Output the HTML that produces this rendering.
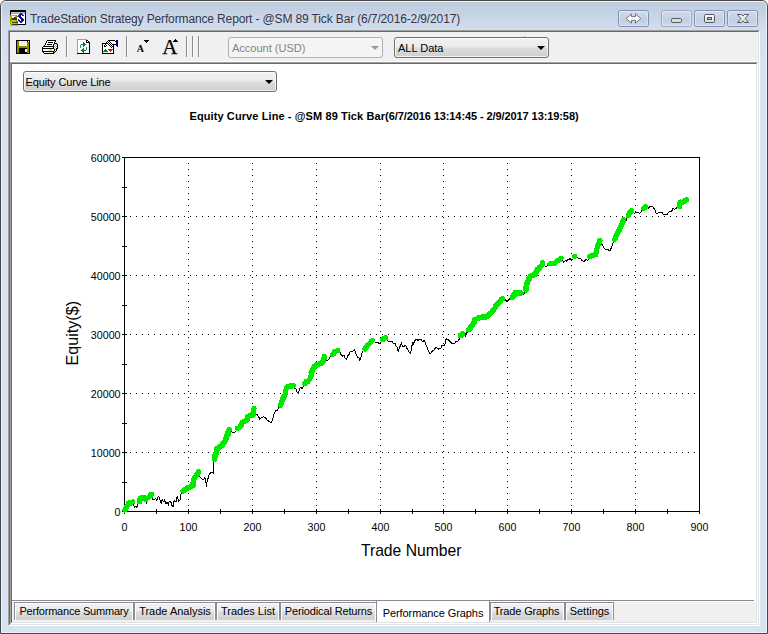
<!DOCTYPE html>
<html><head><meta charset="utf-8"><title>TradeStation Strategy Performance Report</title>
<style>
*{box-sizing:border-box;margin:0;padding:0}
html,body{width:768px;height:634px;overflow:hidden;background:#fff}
body{font-family:"Liberation Sans",sans-serif;font-size:11px;color:#000;position:relative}
.abs{position:absolute}
#frame{position:absolute;left:0;top:0;width:768px;height:634px;border:1px solid #474747;border-radius:6px 6px 0 0;
 background:linear-gradient(to bottom,#bccbdc 0px,#c6d4e4 14px,#d2dfee 30px,#d6e3f1 60px,#d6e3f1 100%);}
#frame:before{content:"";position:absolute;left:0;top:0;right:0;bottom:0;border:1px solid #ecf2f9;border-radius:5px 5px 0 0}
#titletxt{left:30px;top:10px;font-size:12px;line-height:18px;color:#34344a;white-space:nowrap;letter-spacing:-0.135px;text-shadow:0 0 5px rgba(232,238,246,.6)}
.cbtn{position:absolute;top:10px;height:17px;width:31px;border:1px solid #8392b3;border-radius:2.5px;
 background:linear-gradient(to bottom,#cfdbe9 0,#c6d3e4 48%,#c0cee1 52%,#cad7e7 100%);box-shadow:inset 0 0 0 1px rgba(255,255,255,.4)}
#client{left:8px;top:30px;width:752px;height:596px;background:#f0f0f0;border-style:solid;border-width:1px;border-color:#a0a0a0 #fff #fff #a0a0a0}
#client2{left:9px;top:31px;width:750px;height:594px;border-style:solid;border-width:1px;border-color:#696969 #e3e3e3 #e3e3e3 #696969}
#view{left:10px;top:62px;width:748px;height:562px;background:#fff;border-style:solid;border-width:1px;border-color:#a0a0a0 #fff #fff #a0a0a0}
#view2{left:11px;top:63px;width:746px;height:560px;border-style:solid;border-width:1px;border-color:#696969 #e3e3e3 #e3e3e3 #696969}
#tbline{left:10px;top:61px;width:748px;height:1px;background:#fff}
.sep{position:absolute;top:36px;height:21px;width:2px;border-left:1px solid #8c8c8c;border-right:1px solid #f8f8f8}
.combo{position:absolute;height:21px;border:1px solid #707070;border-radius:3px;background:linear-gradient(to bottom,#f2f2f2 0,#ebebeb 48%,#dddddd 52%,#cfcfcf 100%);box-shadow:inset 0 0 0 1px rgba(255,255,255,.7);line-height:21px;padding-left:3px;white-space:nowrap}
.combo i{position:absolute;right:3.5px;top:8px;width:0;height:0;border-left:4px solid transparent;border-right:4px solid transparent;border-top:4px solid #000}
.combo.dis{border-color:#adb2b5;background:#f4f4f4;color:#838383;box-shadow:none}
.combo.dis i{border-top-color:#9a9a9a}
#tabstrip{left:12px;top:601px;width:744px;height:21px;background:#f0f0f0;border-top:1px solid #fff}
#tabline{left:12px;top:600px;width:742px;height:1px;background:#898c95}
.tab{position:absolute;top:602px;height:18px;border:1px solid #898c95;border-bottom:none;background:linear-gradient(to bottom,#f2f2f2 0,#ebebeb 47%,#dddddd 53%,#cfcfcf 100%);box-shadow:inset 1px 1px 0 #fff,inset -1px 0 0 #fff;line-height:17px;text-align:center;white-space:nowrap;padding-top:0px}
.tab.act{top:600px;height:22px;background:#fff;box-shadow:none;border-top:1px solid #898c95;line-height:24px;border-bottom:none}
svg text{font-family:"Liberation Sans",sans-serif}
</style></head><body>
<div id="frame"></div>
<!-- app icon -->
<svg class="abs" style="left:10px;top:10px" width="16" height="16" viewBox="0 0 16 16" shape-rendering="crispEdges"><path d="M0,0h16v1h-16zM0,1h16v1h-16zM0,2h1v1h-1zM15,2h1v1h-1zM0,3h1v1h-1zM15,3h1v1h-1zM0,4h1v1h-1zM15,4h1v1h-1zM15,5h1v1h-1zM15,6h1v1h-1zM15,7h1v1h-1zM15,8h1v1h-1zM15,9h1v1h-1zM15,10h1v1h-1zM15,11h1v1h-1zM15,12h1v1h-1zM15,13h1v1h-1zM8,14h8v1h-8z" fill="#000"/><path d="M1,2h14v1h-14zM1,3h9v1h-9zM12,3h3v1h-3z" fill="#b4b4b4"/><path d="M10,3h2v1h-2zM9,4h4v1h-4zM8,5h3v1h-3zM12,5h2v1h-2zM8,6h3v1h-3zM9,7h3v1h-3zM10,8h3v1h-3zM8,9h1v1h-1zM11,9h3v1h-3zM8,10h2v1h-2zM11,10h3v1h-3zM9,11h4v1h-4zM10,12h2v1h-2z" fill="#10109c"/><path d="M1,4h8v1h-8zM13,4h2v1h-2zM7,5h1v1h-1zM11,5h1v1h-1zM14,5h1v1h-1zM2,6h3v1h-3zM11,6h4v1h-4zM2,7h2v1h-2zM7,7h2v1h-2zM12,7h3v1h-3zM7,8h3v1h-3zM13,8h2v1h-2zM7,9h1v1h-1zM9,9h2v1h-2zM14,9h1v1h-1zM7,10h1v1h-1zM10,10h1v1h-1zM14,10h1v1h-1zM8,11h1v1h-1zM13,11h2v1h-2zM8,12h2v1h-2zM12,12h3v1h-3zM8,13h7v1h-7z" fill="#fff"/><path d="M0,5h1v1h-1zM6,5h1v1h-1zM0,6h1v1h-1zM6,6h2v1h-2zM1,7h1v1h-1zM6,7h1v1h-1zM1,8h1v1h-1zM0,9h2v1h-2zM0,10h2v1h-2zM6,10h1v1h-1zM0,11h1v1h-1zM6,11h2v1h-2zM0,13h1v1h-1zM7,13h1v1h-1zM1,15h1v1h-1zM6,15h1v1h-1z" fill="#8a8a00"/><path d="M1,5h5v1h-5zM1,6h1v1h-1zM5,6h1v1h-1zM0,7h1v1h-1zM0,8h1v1h-1zM2,10h4v1h-4zM1,11h5v1h-5zM0,12h2v1h-2zM1,13h6v1h-6zM0,14h2v1h-2zM2,15h4v1h-4z" fill="#c4c400"/><path d="M4,7h2v1h-2zM2,8h5v1h-5zM2,9h5v1h-5zM2,12h6v1h-6zM2,14h6v1h-6z" fill="#3c3c00"/></svg>
<div id="titletxt" class="abs">TradeStation Strategy Performance Report - @SM 89 Tick Bar (6/7/2016-2/9/2017)</div>
<!-- caption buttons -->
<div class="cbtn" style="left:618px"><svg width="29" height="15" viewBox="0 0 29 15" style="position:absolute;left:0;top:0"><path d="M7.200,7.500l5.300,-4.600v2.800h4v-2.800l5.300,4.600l-5.300,4.600v-2.800h-4v2.800z" fill="#fff" stroke="#6e727a" stroke-width="1" stroke-linejoin="round"/></svg></div>
<div class="cbtn" style="left:661px;border-color:#9ba8bf"><svg width="29" height="15" viewBox="0 0 29 15" style="position:absolute;left:0;top:0"><rect x="9.500" y="7.500" width="10" height="4" rx="1.2" fill="#dcdcdc" stroke="#55595f"/></svg></div>
<div class="cbtn" style="left:694px"><svg width="29" height="15" viewBox="0 0 29 15" style="position:absolute;left:0;top:0"><defs><linearGradient id="gg" x1="0" y1="0" x2="0" y2="1"><stop offset="0" stop-color="#fff"/><stop offset="1" stop-color="#d4d6da"/></linearGradient></defs><rect x="9.500" y="3.500" width="10" height="8" rx="1.2" fill="url(#gg)" stroke="#55595f"/><rect x="12.500" y="6.500" width="4" height="2" fill="#c4d0e4" stroke="#4a4e58"/></svg></div>
<div class="cbtn" style="left:727px"><svg width="29" height="15" viewBox="0 0 29 15" style="position:absolute;left:0;top:0"><path d="M9.500,3.500h4l1.500,1.700l1.500,-1.700h4l-3.400,4l3.400,4h-4l-1.500,-1.700l-1.500,1.700h-4l3.400,-4z" fill="url(#gg)" stroke="#55595f" stroke-width="1" stroke-linejoin="round"/></svg></div>

<div id="client" class="abs"></div><div id="client2" class="abs"></div>
<div id="tbline" class="abs"></div>
<div id="view" class="abs"></div><div id="view2" class="abs"></div>

<!-- toolbar icons -->
<svg class="abs" style="left:12px;top:34px" width="200" height="26" viewBox="12 34 200 26" shape-rendering="crispEdges">
<!-- save -->
<rect x="16" y="40" width="14" height="14" fill="#000"/><rect x="17" y="41" width="2" height="12" fill="#8a8a00"/><rect x="27" y="42" width="2" height="11" fill="#8a8a00"/><rect x="19" y="46" width="8" height="2" fill="#8a8a00"/>
<rect x="19" y="41" width="8" height="5" fill="#f0f0f0"/><rect x="25" y="49" width="2" height="3" fill="#f0f0f0"/><rect x="28" y="41" width="1" height="1" fill="#f0f0f0"/>
<!-- print -->
<path d="M47,40h9v1h-9zM46,41h1v1h-1zM55,41h1v1h-1zM46,42h1v1h-1zM48,42h5v1h-5zM54,42h1v1h-1zM45,43h1v1h-1zM54,43h3v1h-3zM45,44h1v1h-1zM47,44h5v1h-5zM53,44h1v1h-1zM57,44h1v1h-1zM44,45h1v1h-1zM53,45h1v1h-1zM57,45h1v1h-1zM43,46h11v1h-11zM57,46h1v1h-1zM42,47h1v1h-1zM53,47h1v1h-1zM57,47h1v1h-1zM42,48h12v1h-12zM56,48h2v1h-2zM42,49h1v1h-1zM54,49h1v1h-1zM56,49h1v1h-1zM42,50h1v1h-1zM54,50h1v1h-1zM56,50h1v1h-1zM42,51h12v1h-12zM55,51h1v1h-1zM43,52h1v1h-1zM53,52h2v1h-2zM44,53h10v1h-10z" fill="#000"/><path d="M47,41h8v1h-8zM47,42h1v1h-1zM53,42h1v1h-1zM46,43h8v1h-8zM46,44h1v1h-1zM52,44h1v1h-1zM55,44h1v1h-1zM45,45h8v1h-8zM54,45h1v1h-1zM56,45h1v1h-1zM55,46h1v1h-1zM43,47h10v1h-10zM54,47h1v1h-1zM56,47h1v1h-1zM55,48h1v1h-1zM43,49h6v1h-6zM52,49h2v1h-2zM43,50h6v1h-6zM52,50h2v1h-2zM55,50h1v1h-1zM44,52h9v1h-9z" fill="#fff"/><path d="M54,44h1v1h-1zM56,44h1v1h-1zM55,45h1v1h-1zM54,46h1v1h-1zM56,46h1v1h-1zM55,47h1v1h-1zM54,48h1v1h-1zM55,49h1v1h-1zM54,51h1v1h-1z" fill="#a8a8a8"/><path d="M49,49h3v1h-3zM49,50h3v1h-3z" fill="#e6e600"/><path d="M77,39h10v1h-10zM77,40h1v1h-1zM77,41h1v1h-1zM77,42h1v1h-1zM77,43h1v1h-1zM77,44h1v1h-1zM77,45h1v1h-1zM77,46h1v1h-1zM77,47h1v1h-1zM77,48h1v1h-1zM77,49h1v1h-1zM77,50h1v1h-1zM77,51h1v1h-1zM77,52h1v1h-1z" fill="#a0a0a0"/><path d="M78,40h8v1h-8zM78,41h8v1h-8zM87,41h1v1h-1zM78,42h5v1h-5zM84,42h2v1h-2zM78,43h5v1h-5zM85,43h4v1h-4zM78,44h3v1h-3zM86,44h3v1h-3zM78,45h2v1h-2zM81,45h2v1h-2zM85,45h4v1h-4zM78,46h2v1h-2zM81,46h2v1h-2zM84,46h5v1h-5zM78,47h2v1h-2zM81,47h5v1h-5zM87,47h2v1h-2zM78,48h5v1h-5zM84,48h2v1h-2zM87,48h2v1h-2zM78,49h4v1h-4zM84,49h2v1h-2zM87,49h2v1h-2zM78,50h3v1h-3zM86,50h3v1h-3zM78,51h4v1h-4zM84,51h5v1h-5zM78,52h5v1h-5zM84,52h5v1h-5z" fill="#fff"/><path d="M86,40h2v1h-2zM86,41h1v1h-1zM88,41h1v1h-1zM86,42h4v1h-4zM89,43h1v1h-1zM89,44h1v1h-1zM89,45h1v1h-1zM89,46h1v1h-1zM89,47h1v1h-1zM89,48h1v1h-1zM89,49h1v1h-1zM89,50h1v1h-1zM89,51h1v1h-1zM89,52h1v1h-1zM77,53h13v1h-13z" fill="#000"/><path d="M83,42h1v1h-1zM83,43h2v1h-2zM81,44h5v1h-5zM83,45h2v1h-2zM83,46h1v1h-1zM83,48h1v1h-1zM82,49h2v1h-2zM81,50h5v1h-5zM82,51h2v1h-2zM83,52h1v1h-1z" fill="#008a00"/><path d="M80,45h1v1h-1zM80,46h1v1h-1zM80,47h1v1h-1zM86,47h1v1h-1zM86,48h1v1h-1zM86,49h1v1h-1z" fill="#1a8fa0"/><path d="M108,40h1v1h-1zM107,41h1v1h-1zM109,41h1v1h-1zM106,42h1v1h-1zM108,42h1v1h-1zM110,42h1v1h-1zM107,43h1v1h-1zM109,43h1v1h-1zM111,43h1v1h-1zM105,44h1v1h-1zM108,44h1v1h-1zM110,44h1v1h-1zM112,44h1v1h-1zM106,45h1v1h-1zM109,45h1v1h-1zM111,45h1v1h-1zM110,46h1v1h-1zM112,46h1v1h-1zM111,47h1v1h-1z" fill="#000"/><path d="M109,40h6v1h-6zM115,41h1v1h-1zM102,43h5v1h-5zM102,44h1v1h-1zM113,44h3v1h-3zM102,45h1v1h-1zM104,45h1v1h-1zM113,45h1v1h-1zM102,46h1v1h-1zM104,46h2v1h-2zM113,46h1v1h-1zM102,47h1v1h-1zM113,47h1v1h-1zM102,48h1v1h-1zM113,48h1v1h-1zM102,49h1v1h-1zM113,49h1v1h-1zM102,50h1v1h-1zM113,50h1v1h-1zM102,51h1v1h-1zM113,51h1v1h-1zM102,52h1v1h-1zM113,52h1v1h-1zM102,53h12v1h-12z" fill="#000"/><path d="M116,40h2v1h-2zM116,41h2v1h-2zM116,42h2v1h-2zM116,43h2v1h-2zM116,44h2v1h-2zM116,45h2v1h-2zM117,46h1v1h-1z" fill="#00008c"/><path d="M108,41h1v1h-1zM110,41h5v1h-5zM107,42h1v1h-1zM109,42h1v1h-1zM111,42h5v1h-5zM108,43h1v1h-1zM110,43h1v1h-1zM112,43h4v1h-4zM103,44h2v1h-2zM106,44h2v1h-2zM109,44h1v1h-1zM111,44h1v1h-1zM103,45h1v1h-1zM105,45h1v1h-1zM107,45h2v1h-2zM110,45h1v1h-1zM112,45h1v1h-1zM103,46h1v1h-1zM106,46h4v1h-4zM111,46h1v1h-1zM103,47h8v1h-8zM112,47h1v1h-1zM103,48h10v1h-10zM103,49h2v1h-2zM106,49h2v1h-2zM103,50h1v1h-1zM107,50h2v1h-2zM112,50h1v1h-1zM108,51h2v1h-2zM111,51h2v1h-2zM103,52h10v1h-10z" fill="#fff"/><path d="M105,49h1v1h-1zM104,50h3v1h-3zM103,51h5v1h-5z" fill="#008a00"/><path d="M108,49h5v1h-5zM109,50h3v1h-3zM110,51h1v1h-1z" fill="#ff0000"/>
<!-- small A -->
<g shape-rendering="auto"><text x="136.7" y="52" style="font-family:'Liberation Serif',serif;font-weight:bold;font-size:10px">A</text><path d="M144,40h5v1h-1v1h-1v1h-1v-1h-1v-1h-1z" fill="#000" shape-rendering="crispEdges"/>
<text x="162.2" y="54" style="font-family:'Liberation Serif',serif;font-size:21px" stroke="#000" stroke-width=".25">A</text><path d="M173,42h5v-1h-1v-1h-1v-1h-1v1h-1v1h-1z" fill="#000" shape-rendering="crispEdges"/></g>
</svg>
<div class="sep" style="left:66px"></div><div class="sep" style="left:126px"></div>
<div class="sep" style="left:186px"></div><div class="sep" style="left:192px"></div><div class="sep" style="left:198px"></div>
<div class="abs" style="left:358.5px;top:36.5px;width:1.5px;height:1.5px;background:#8c8c8c"></div><div class="abs" style="left:363px;top:36.5px;width:2px;height:1.5px;background:#8c8c8c"></div><div class="abs" style="left:524px;top:36px;width:1px;height:2px;background:#9a9a9a"></div>
<div class="combo dis" style="left:228px;top:37px;width:155px">Account (USD)<i></i></div>
<div class="combo" style="left:394px;top:37px;width:155px">ALL Data<i></i></div>
<div class="combo" style="left:23px;top:71px;width:254px;padding-left:1.5px;letter-spacing:-0.1px">Equity Curve Line<i></i></div>

<!-- chart -->
<svg class="abs" style="left:0;top:0" width="768" height="634" viewBox="0 0 768 634">
<g shape-rendering="crispEdges" stroke="#000" stroke-width="1" fill="none">
<rect x="124.500" y="157.500" width="575" height="354"/>
<path d="M122,511.5h5"/>
<path d="M122,482.5h5"/>
<path d="M122,452.5h5"/>
<path d="M122,423.5h5"/>
<path d="M122,393.5h5"/>
<path d="M122,364.5h5"/>
<path d="M122,334.5h5"/>
<path d="M122,305.5h5"/>
<path d="M122,275.5h5"/>
<path d="M122,246.5h5"/>
<path d="M122,216.5h5"/>
<path d="M122,187.5h5"/>
<path d="M122,157.5h5"/>
<path d="M124.5,509v5"/>
<path d="M156.5,509v5"/>
<path d="M188.5,509v5"/>
<path d="M220.5,509v5"/>
<path d="M252.5,509v5"/>
<path d="M284.5,509v5"/>
<path d="M316.5,509v5"/>
<path d="M348.5,509v5"/>
<path d="M380.5,509v5"/>
<path d="M412.5,509v5"/>
<path d="M443.5,509v5"/>
<path d="M475.5,509v5"/>
<path d="M507.5,509v5"/>
<path d="M539.5,509v5"/>
<path d="M571.5,509v5"/>
<path d="M603.5,509v5"/>
<path d="M635.5,509v5"/>
<path d="M667.5,509v5"/>
<path d="M699.5,509v5"/>
</g>
<g shape-rendering="crispEdges" fill="#000">
<path d="M130,452h1v1h-1zM136,452h1v1h-1zM142,452h1v1h-1zM148,452h1v1h-1zM154,452h1v1h-1zM160,452h1v1h-1zM166,452h1v1h-1zM172,452h1v1h-1zM178,452h1v1h-1zM184,452h1v1h-1zM190,452h1v1h-1zM196,452h1v1h-1zM202,452h1v1h-1zM208,452h1v1h-1zM214,452h1v1h-1zM220,452h1v1h-1zM226,452h1v1h-1zM232,452h1v1h-1zM238,452h1v1h-1zM244,452h1v1h-1zM250,452h1v1h-1zM256,452h1v1h-1zM262,452h1v1h-1zM268,452h1v1h-1zM274,452h1v1h-1zM280,452h1v1h-1zM286,452h1v1h-1zM292,452h1v1h-1zM298,452h1v1h-1zM304,452h1v1h-1zM310,452h1v1h-1zM316,452h1v1h-1zM322,452h1v1h-1zM328,452h1v1h-1zM334,452h1v1h-1zM340,452h1v1h-1zM346,452h1v1h-1zM352,452h1v1h-1zM358,452h1v1h-1zM364,452h1v1h-1zM370,452h1v1h-1zM376,452h1v1h-1zM382,452h1v1h-1zM388,452h1v1h-1zM394,452h1v1h-1zM400,452h1v1h-1zM406,452h1v1h-1zM412,452h1v1h-1zM418,452h1v1h-1zM424,452h1v1h-1zM430,452h1v1h-1zM436,452h1v1h-1zM442,452h1v1h-1zM448,452h1v1h-1zM454,452h1v1h-1zM460,452h1v1h-1zM466,452h1v1h-1zM472,452h1v1h-1zM478,452h1v1h-1zM484,452h1v1h-1zM490,452h1v1h-1zM496,452h1v1h-1zM502,452h1v1h-1zM508,452h1v1h-1zM514,452h1v1h-1zM520,452h1v1h-1zM526,452h1v1h-1zM532,452h1v1h-1zM538,452h1v1h-1zM544,452h1v1h-1zM550,452h1v1h-1zM556,452h1v1h-1zM562,452h1v1h-1zM568,452h1v1h-1zM574,452h1v1h-1zM580,452h1v1h-1zM586,452h1v1h-1zM592,452h1v1h-1zM598,452h1v1h-1zM604,452h1v1h-1zM610,452h1v1h-1zM616,452h1v1h-1zM622,452h1v1h-1zM628,452h1v1h-1zM634,452h1v1h-1zM640,452h1v1h-1zM646,452h1v1h-1zM652,452h1v1h-1zM658,452h1v1h-1zM664,452h1v1h-1zM670,452h1v1h-1zM676,452h1v1h-1zM682,452h1v1h-1zM688,452h1v1h-1zM694,452h1v1h-1zM130,393h1v1h-1zM136,393h1v1h-1zM142,393h1v1h-1zM148,393h1v1h-1zM154,393h1v1h-1zM160,393h1v1h-1zM166,393h1v1h-1zM172,393h1v1h-1zM178,393h1v1h-1zM184,393h1v1h-1zM190,393h1v1h-1zM196,393h1v1h-1zM202,393h1v1h-1zM208,393h1v1h-1zM214,393h1v1h-1zM220,393h1v1h-1zM226,393h1v1h-1zM232,393h1v1h-1zM238,393h1v1h-1zM244,393h1v1h-1zM250,393h1v1h-1zM256,393h1v1h-1zM262,393h1v1h-1zM268,393h1v1h-1zM274,393h1v1h-1zM280,393h1v1h-1zM286,393h1v1h-1zM292,393h1v1h-1zM298,393h1v1h-1zM304,393h1v1h-1zM310,393h1v1h-1zM316,393h1v1h-1zM322,393h1v1h-1zM328,393h1v1h-1zM334,393h1v1h-1zM340,393h1v1h-1zM346,393h1v1h-1zM352,393h1v1h-1zM358,393h1v1h-1zM364,393h1v1h-1zM370,393h1v1h-1zM376,393h1v1h-1zM382,393h1v1h-1zM388,393h1v1h-1zM394,393h1v1h-1zM400,393h1v1h-1zM406,393h1v1h-1zM412,393h1v1h-1zM418,393h1v1h-1zM424,393h1v1h-1zM430,393h1v1h-1zM436,393h1v1h-1zM442,393h1v1h-1zM448,393h1v1h-1zM454,393h1v1h-1zM460,393h1v1h-1zM466,393h1v1h-1zM472,393h1v1h-1zM478,393h1v1h-1zM484,393h1v1h-1zM490,393h1v1h-1zM496,393h1v1h-1zM502,393h1v1h-1zM508,393h1v1h-1zM514,393h1v1h-1zM520,393h1v1h-1zM526,393h1v1h-1zM532,393h1v1h-1zM538,393h1v1h-1zM544,393h1v1h-1zM550,393h1v1h-1zM556,393h1v1h-1zM562,393h1v1h-1zM568,393h1v1h-1zM574,393h1v1h-1zM580,393h1v1h-1zM586,393h1v1h-1zM592,393h1v1h-1zM598,393h1v1h-1zM604,393h1v1h-1zM610,393h1v1h-1zM616,393h1v1h-1zM622,393h1v1h-1zM628,393h1v1h-1zM634,393h1v1h-1zM640,393h1v1h-1zM646,393h1v1h-1zM652,393h1v1h-1zM658,393h1v1h-1zM664,393h1v1h-1zM670,393h1v1h-1zM676,393h1v1h-1zM682,393h1v1h-1zM688,393h1v1h-1zM694,393h1v1h-1zM130,334h1v1h-1zM136,334h1v1h-1zM142,334h1v1h-1zM148,334h1v1h-1zM154,334h1v1h-1zM160,334h1v1h-1zM166,334h1v1h-1zM172,334h1v1h-1zM178,334h1v1h-1zM184,334h1v1h-1zM190,334h1v1h-1zM196,334h1v1h-1zM202,334h1v1h-1zM208,334h1v1h-1zM214,334h1v1h-1zM220,334h1v1h-1zM226,334h1v1h-1zM232,334h1v1h-1zM238,334h1v1h-1zM244,334h1v1h-1zM250,334h1v1h-1zM256,334h1v1h-1zM262,334h1v1h-1zM268,334h1v1h-1zM274,334h1v1h-1zM280,334h1v1h-1zM286,334h1v1h-1zM292,334h1v1h-1zM298,334h1v1h-1zM304,334h1v1h-1zM310,334h1v1h-1zM316,334h1v1h-1zM322,334h1v1h-1zM328,334h1v1h-1zM334,334h1v1h-1zM340,334h1v1h-1zM346,334h1v1h-1zM352,334h1v1h-1zM358,334h1v1h-1zM364,334h1v1h-1zM370,334h1v1h-1zM376,334h1v1h-1zM382,334h1v1h-1zM388,334h1v1h-1zM394,334h1v1h-1zM400,334h1v1h-1zM406,334h1v1h-1zM412,334h1v1h-1zM418,334h1v1h-1zM424,334h1v1h-1zM430,334h1v1h-1zM436,334h1v1h-1zM442,334h1v1h-1zM448,334h1v1h-1zM454,334h1v1h-1zM460,334h1v1h-1zM466,334h1v1h-1zM472,334h1v1h-1zM478,334h1v1h-1zM484,334h1v1h-1zM490,334h1v1h-1zM496,334h1v1h-1zM502,334h1v1h-1zM508,334h1v1h-1zM514,334h1v1h-1zM520,334h1v1h-1zM526,334h1v1h-1zM532,334h1v1h-1zM538,334h1v1h-1zM544,334h1v1h-1zM550,334h1v1h-1zM556,334h1v1h-1zM562,334h1v1h-1zM568,334h1v1h-1zM574,334h1v1h-1zM580,334h1v1h-1zM586,334h1v1h-1zM592,334h1v1h-1zM598,334h1v1h-1zM604,334h1v1h-1zM610,334h1v1h-1zM616,334h1v1h-1zM622,334h1v1h-1zM628,334h1v1h-1zM634,334h1v1h-1zM640,334h1v1h-1zM646,334h1v1h-1zM652,334h1v1h-1zM658,334h1v1h-1zM664,334h1v1h-1zM670,334h1v1h-1zM676,334h1v1h-1zM682,334h1v1h-1zM688,334h1v1h-1zM694,334h1v1h-1zM130,275h1v1h-1zM136,275h1v1h-1zM142,275h1v1h-1zM148,275h1v1h-1zM154,275h1v1h-1zM160,275h1v1h-1zM166,275h1v1h-1zM172,275h1v1h-1zM178,275h1v1h-1zM184,275h1v1h-1zM190,275h1v1h-1zM196,275h1v1h-1zM202,275h1v1h-1zM208,275h1v1h-1zM214,275h1v1h-1zM220,275h1v1h-1zM226,275h1v1h-1zM232,275h1v1h-1zM238,275h1v1h-1zM244,275h1v1h-1zM250,275h1v1h-1zM256,275h1v1h-1zM262,275h1v1h-1zM268,275h1v1h-1zM274,275h1v1h-1zM280,275h1v1h-1zM286,275h1v1h-1zM292,275h1v1h-1zM298,275h1v1h-1zM304,275h1v1h-1zM310,275h1v1h-1zM316,275h1v1h-1zM322,275h1v1h-1zM328,275h1v1h-1zM334,275h1v1h-1zM340,275h1v1h-1zM346,275h1v1h-1zM352,275h1v1h-1zM358,275h1v1h-1zM364,275h1v1h-1zM370,275h1v1h-1zM376,275h1v1h-1zM382,275h1v1h-1zM388,275h1v1h-1zM394,275h1v1h-1zM400,275h1v1h-1zM406,275h1v1h-1zM412,275h1v1h-1zM418,275h1v1h-1zM424,275h1v1h-1zM430,275h1v1h-1zM436,275h1v1h-1zM442,275h1v1h-1zM448,275h1v1h-1zM454,275h1v1h-1zM460,275h1v1h-1zM466,275h1v1h-1zM472,275h1v1h-1zM478,275h1v1h-1zM484,275h1v1h-1zM490,275h1v1h-1zM496,275h1v1h-1zM502,275h1v1h-1zM508,275h1v1h-1zM514,275h1v1h-1zM520,275h1v1h-1zM526,275h1v1h-1zM532,275h1v1h-1zM538,275h1v1h-1zM544,275h1v1h-1zM550,275h1v1h-1zM556,275h1v1h-1zM562,275h1v1h-1zM568,275h1v1h-1zM574,275h1v1h-1zM580,275h1v1h-1zM586,275h1v1h-1zM592,275h1v1h-1zM598,275h1v1h-1zM604,275h1v1h-1zM610,275h1v1h-1zM616,275h1v1h-1zM622,275h1v1h-1zM628,275h1v1h-1zM634,275h1v1h-1zM640,275h1v1h-1zM646,275h1v1h-1zM652,275h1v1h-1zM658,275h1v1h-1zM664,275h1v1h-1zM670,275h1v1h-1zM676,275h1v1h-1zM682,275h1v1h-1zM688,275h1v1h-1zM694,275h1v1h-1zM130,216h1v1h-1zM136,216h1v1h-1zM142,216h1v1h-1zM148,216h1v1h-1zM154,216h1v1h-1zM160,216h1v1h-1zM166,216h1v1h-1zM172,216h1v1h-1zM178,216h1v1h-1zM184,216h1v1h-1zM190,216h1v1h-1zM196,216h1v1h-1zM202,216h1v1h-1zM208,216h1v1h-1zM214,216h1v1h-1zM220,216h1v1h-1zM226,216h1v1h-1zM232,216h1v1h-1zM238,216h1v1h-1zM244,216h1v1h-1zM250,216h1v1h-1zM256,216h1v1h-1zM262,216h1v1h-1zM268,216h1v1h-1zM274,216h1v1h-1zM280,216h1v1h-1zM286,216h1v1h-1zM292,216h1v1h-1zM298,216h1v1h-1zM304,216h1v1h-1zM310,216h1v1h-1zM316,216h1v1h-1zM322,216h1v1h-1zM328,216h1v1h-1zM334,216h1v1h-1zM340,216h1v1h-1zM346,216h1v1h-1zM352,216h1v1h-1zM358,216h1v1h-1zM364,216h1v1h-1zM370,216h1v1h-1zM376,216h1v1h-1zM382,216h1v1h-1zM388,216h1v1h-1zM394,216h1v1h-1zM400,216h1v1h-1zM406,216h1v1h-1zM412,216h1v1h-1zM418,216h1v1h-1zM424,216h1v1h-1zM430,216h1v1h-1zM436,216h1v1h-1zM442,216h1v1h-1zM448,216h1v1h-1zM454,216h1v1h-1zM460,216h1v1h-1zM466,216h1v1h-1zM472,216h1v1h-1zM478,216h1v1h-1zM484,216h1v1h-1zM490,216h1v1h-1zM496,216h1v1h-1zM502,216h1v1h-1zM508,216h1v1h-1zM514,216h1v1h-1zM520,216h1v1h-1zM526,216h1v1h-1zM532,216h1v1h-1zM538,216h1v1h-1zM544,216h1v1h-1zM550,216h1v1h-1zM556,216h1v1h-1zM562,216h1v1h-1zM568,216h1v1h-1zM574,216h1v1h-1zM580,216h1v1h-1zM586,216h1v1h-1zM592,216h1v1h-1zM598,216h1v1h-1zM604,216h1v1h-1zM610,216h1v1h-1zM616,216h1v1h-1zM622,216h1v1h-1zM628,216h1v1h-1zM634,216h1v1h-1zM640,216h1v1h-1zM646,216h1v1h-1zM652,216h1v1h-1zM658,216h1v1h-1zM664,216h1v1h-1zM670,216h1v1h-1zM676,216h1v1h-1zM682,216h1v1h-1zM688,216h1v1h-1zM694,216h1v1h-1zM188,505h1v1h-1zM188,499h1v1h-1zM188,493h1v1h-1zM188,487h1v1h-1zM188,481h1v1h-1zM188,475h1v1h-1zM188,469h1v1h-1zM188,463h1v1h-1zM188,457h1v1h-1zM188,451h1v1h-1zM188,445h1v1h-1zM188,439h1v1h-1zM188,433h1v1h-1zM188,427h1v1h-1zM188,421h1v1h-1zM188,415h1v1h-1zM188,409h1v1h-1zM188,403h1v1h-1zM188,397h1v1h-1zM188,391h1v1h-1zM188,385h1v1h-1zM188,379h1v1h-1zM188,373h1v1h-1zM188,367h1v1h-1zM188,361h1v1h-1zM188,355h1v1h-1zM188,349h1v1h-1zM188,343h1v1h-1zM188,337h1v1h-1zM188,331h1v1h-1zM188,325h1v1h-1zM188,319h1v1h-1zM188,313h1v1h-1zM188,307h1v1h-1zM188,301h1v1h-1zM188,295h1v1h-1zM188,289h1v1h-1zM188,283h1v1h-1zM188,277h1v1h-1zM188,271h1v1h-1zM188,265h1v1h-1zM188,259h1v1h-1zM188,253h1v1h-1zM188,247h1v1h-1zM188,241h1v1h-1zM188,235h1v1h-1zM188,229h1v1h-1zM188,223h1v1h-1zM188,217h1v1h-1zM188,211h1v1h-1zM188,205h1v1h-1zM188,199h1v1h-1zM188,193h1v1h-1zM188,187h1v1h-1zM188,181h1v1h-1zM188,175h1v1h-1zM188,169h1v1h-1zM188,163h1v1h-1zM252,505h1v1h-1zM252,499h1v1h-1zM252,493h1v1h-1zM252,487h1v1h-1zM252,481h1v1h-1zM252,475h1v1h-1zM252,469h1v1h-1zM252,463h1v1h-1zM252,457h1v1h-1zM252,451h1v1h-1zM252,445h1v1h-1zM252,439h1v1h-1zM252,433h1v1h-1zM252,427h1v1h-1zM252,421h1v1h-1zM252,415h1v1h-1zM252,409h1v1h-1zM252,403h1v1h-1zM252,397h1v1h-1zM252,391h1v1h-1zM252,385h1v1h-1zM252,379h1v1h-1zM252,373h1v1h-1zM252,367h1v1h-1zM252,361h1v1h-1zM252,355h1v1h-1zM252,349h1v1h-1zM252,343h1v1h-1zM252,337h1v1h-1zM252,331h1v1h-1zM252,325h1v1h-1zM252,319h1v1h-1zM252,313h1v1h-1zM252,307h1v1h-1zM252,301h1v1h-1zM252,295h1v1h-1zM252,289h1v1h-1zM252,283h1v1h-1zM252,277h1v1h-1zM252,271h1v1h-1zM252,265h1v1h-1zM252,259h1v1h-1zM252,253h1v1h-1zM252,247h1v1h-1zM252,241h1v1h-1zM252,235h1v1h-1zM252,229h1v1h-1zM252,223h1v1h-1zM252,217h1v1h-1zM252,211h1v1h-1zM252,205h1v1h-1zM252,199h1v1h-1zM252,193h1v1h-1zM252,187h1v1h-1zM252,181h1v1h-1zM252,175h1v1h-1zM252,169h1v1h-1zM252,163h1v1h-1zM316,505h1v1h-1zM316,499h1v1h-1zM316,493h1v1h-1zM316,487h1v1h-1zM316,481h1v1h-1zM316,475h1v1h-1zM316,469h1v1h-1zM316,463h1v1h-1zM316,457h1v1h-1zM316,451h1v1h-1zM316,445h1v1h-1zM316,439h1v1h-1zM316,433h1v1h-1zM316,427h1v1h-1zM316,421h1v1h-1zM316,415h1v1h-1zM316,409h1v1h-1zM316,403h1v1h-1zM316,397h1v1h-1zM316,391h1v1h-1zM316,385h1v1h-1zM316,379h1v1h-1zM316,373h1v1h-1zM316,367h1v1h-1zM316,361h1v1h-1zM316,355h1v1h-1zM316,349h1v1h-1zM316,343h1v1h-1zM316,337h1v1h-1zM316,331h1v1h-1zM316,325h1v1h-1zM316,319h1v1h-1zM316,313h1v1h-1zM316,307h1v1h-1zM316,301h1v1h-1zM316,295h1v1h-1zM316,289h1v1h-1zM316,283h1v1h-1zM316,277h1v1h-1zM316,271h1v1h-1zM316,265h1v1h-1zM316,259h1v1h-1zM316,253h1v1h-1zM316,247h1v1h-1zM316,241h1v1h-1zM316,235h1v1h-1zM316,229h1v1h-1zM316,223h1v1h-1zM316,217h1v1h-1zM316,211h1v1h-1zM316,205h1v1h-1zM316,199h1v1h-1zM316,193h1v1h-1zM316,187h1v1h-1zM316,181h1v1h-1zM316,175h1v1h-1zM316,169h1v1h-1zM316,163h1v1h-1zM380,505h1v1h-1zM380,499h1v1h-1zM380,493h1v1h-1zM380,487h1v1h-1zM380,481h1v1h-1zM380,475h1v1h-1zM380,469h1v1h-1zM380,463h1v1h-1zM380,457h1v1h-1zM380,451h1v1h-1zM380,445h1v1h-1zM380,439h1v1h-1zM380,433h1v1h-1zM380,427h1v1h-1zM380,421h1v1h-1zM380,415h1v1h-1zM380,409h1v1h-1zM380,403h1v1h-1zM380,397h1v1h-1zM380,391h1v1h-1zM380,385h1v1h-1zM380,379h1v1h-1zM380,373h1v1h-1zM380,367h1v1h-1zM380,361h1v1h-1zM380,355h1v1h-1zM380,349h1v1h-1zM380,343h1v1h-1zM380,337h1v1h-1zM380,331h1v1h-1zM380,325h1v1h-1zM380,319h1v1h-1zM380,313h1v1h-1zM380,307h1v1h-1zM380,301h1v1h-1zM380,295h1v1h-1zM380,289h1v1h-1zM380,283h1v1h-1zM380,277h1v1h-1zM380,271h1v1h-1zM380,265h1v1h-1zM380,259h1v1h-1zM380,253h1v1h-1zM380,247h1v1h-1zM380,241h1v1h-1zM380,235h1v1h-1zM380,229h1v1h-1zM380,223h1v1h-1zM380,217h1v1h-1zM380,211h1v1h-1zM380,205h1v1h-1zM380,199h1v1h-1zM380,193h1v1h-1zM380,187h1v1h-1zM380,181h1v1h-1zM380,175h1v1h-1zM380,169h1v1h-1zM380,163h1v1h-1zM443,505h1v1h-1zM443,499h1v1h-1zM443,493h1v1h-1zM443,487h1v1h-1zM443,481h1v1h-1zM443,475h1v1h-1zM443,469h1v1h-1zM443,463h1v1h-1zM443,457h1v1h-1zM443,451h1v1h-1zM443,445h1v1h-1zM443,439h1v1h-1zM443,433h1v1h-1zM443,427h1v1h-1zM443,421h1v1h-1zM443,415h1v1h-1zM443,409h1v1h-1zM443,403h1v1h-1zM443,397h1v1h-1zM443,391h1v1h-1zM443,385h1v1h-1zM443,379h1v1h-1zM443,373h1v1h-1zM443,367h1v1h-1zM443,361h1v1h-1zM443,355h1v1h-1zM443,349h1v1h-1zM443,343h1v1h-1zM443,337h1v1h-1zM443,331h1v1h-1zM443,325h1v1h-1zM443,319h1v1h-1zM443,313h1v1h-1zM443,307h1v1h-1zM443,301h1v1h-1zM443,295h1v1h-1zM443,289h1v1h-1zM443,283h1v1h-1zM443,277h1v1h-1zM443,271h1v1h-1zM443,265h1v1h-1zM443,259h1v1h-1zM443,253h1v1h-1zM443,247h1v1h-1zM443,241h1v1h-1zM443,235h1v1h-1zM443,229h1v1h-1zM443,223h1v1h-1zM443,217h1v1h-1zM443,211h1v1h-1zM443,205h1v1h-1zM443,199h1v1h-1zM443,193h1v1h-1zM443,187h1v1h-1zM443,181h1v1h-1zM443,175h1v1h-1zM443,169h1v1h-1zM443,163h1v1h-1zM507,505h1v1h-1zM507,499h1v1h-1zM507,493h1v1h-1zM507,487h1v1h-1zM507,481h1v1h-1zM507,475h1v1h-1zM507,469h1v1h-1zM507,463h1v1h-1zM507,457h1v1h-1zM507,451h1v1h-1zM507,445h1v1h-1zM507,439h1v1h-1zM507,433h1v1h-1zM507,427h1v1h-1zM507,421h1v1h-1zM507,415h1v1h-1zM507,409h1v1h-1zM507,403h1v1h-1zM507,397h1v1h-1zM507,391h1v1h-1zM507,385h1v1h-1zM507,379h1v1h-1zM507,373h1v1h-1zM507,367h1v1h-1zM507,361h1v1h-1zM507,355h1v1h-1zM507,349h1v1h-1zM507,343h1v1h-1zM507,337h1v1h-1zM507,331h1v1h-1zM507,325h1v1h-1zM507,319h1v1h-1zM507,313h1v1h-1zM507,307h1v1h-1zM507,301h1v1h-1zM507,295h1v1h-1zM507,289h1v1h-1zM507,283h1v1h-1zM507,277h1v1h-1zM507,271h1v1h-1zM507,265h1v1h-1zM507,259h1v1h-1zM507,253h1v1h-1zM507,247h1v1h-1zM507,241h1v1h-1zM507,235h1v1h-1zM507,229h1v1h-1zM507,223h1v1h-1zM507,217h1v1h-1zM507,211h1v1h-1zM507,205h1v1h-1zM507,199h1v1h-1zM507,193h1v1h-1zM507,187h1v1h-1zM507,181h1v1h-1zM507,175h1v1h-1zM507,169h1v1h-1zM507,163h1v1h-1zM571,505h1v1h-1zM571,499h1v1h-1zM571,493h1v1h-1zM571,487h1v1h-1zM571,481h1v1h-1zM571,475h1v1h-1zM571,469h1v1h-1zM571,463h1v1h-1zM571,457h1v1h-1zM571,451h1v1h-1zM571,445h1v1h-1zM571,439h1v1h-1zM571,433h1v1h-1zM571,427h1v1h-1zM571,421h1v1h-1zM571,415h1v1h-1zM571,409h1v1h-1zM571,403h1v1h-1zM571,397h1v1h-1zM571,391h1v1h-1zM571,385h1v1h-1zM571,379h1v1h-1zM571,373h1v1h-1zM571,367h1v1h-1zM571,361h1v1h-1zM571,355h1v1h-1zM571,349h1v1h-1zM571,343h1v1h-1zM571,337h1v1h-1zM571,331h1v1h-1zM571,325h1v1h-1zM571,319h1v1h-1zM571,313h1v1h-1zM571,307h1v1h-1zM571,301h1v1h-1zM571,295h1v1h-1zM571,289h1v1h-1zM571,283h1v1h-1zM571,277h1v1h-1zM571,271h1v1h-1zM571,265h1v1h-1zM571,259h1v1h-1zM571,253h1v1h-1zM571,247h1v1h-1zM571,241h1v1h-1zM571,235h1v1h-1zM571,229h1v1h-1zM571,223h1v1h-1zM571,217h1v1h-1zM571,211h1v1h-1zM571,205h1v1h-1zM571,199h1v1h-1zM571,193h1v1h-1zM571,187h1v1h-1zM571,181h1v1h-1zM571,175h1v1h-1zM571,169h1v1h-1zM571,163h1v1h-1zM635,505h1v1h-1zM635,499h1v1h-1zM635,493h1v1h-1zM635,487h1v1h-1zM635,481h1v1h-1zM635,475h1v1h-1zM635,469h1v1h-1zM635,463h1v1h-1zM635,457h1v1h-1zM635,451h1v1h-1zM635,445h1v1h-1zM635,439h1v1h-1zM635,433h1v1h-1zM635,427h1v1h-1zM635,421h1v1h-1zM635,415h1v1h-1zM635,409h1v1h-1zM635,403h1v1h-1zM635,397h1v1h-1zM635,391h1v1h-1zM635,385h1v1h-1zM635,379h1v1h-1zM635,373h1v1h-1zM635,367h1v1h-1zM635,361h1v1h-1zM635,355h1v1h-1zM635,349h1v1h-1zM635,343h1v1h-1zM635,337h1v1h-1zM635,331h1v1h-1zM635,325h1v1h-1zM635,319h1v1h-1zM635,313h1v1h-1zM635,307h1v1h-1zM635,301h1v1h-1zM635,295h1v1h-1zM635,289h1v1h-1zM635,283h1v1h-1zM635,277h1v1h-1zM635,271h1v1h-1zM635,265h1v1h-1zM635,259h1v1h-1zM635,253h1v1h-1zM635,247h1v1h-1zM635,241h1v1h-1zM635,235h1v1h-1zM635,229h1v1h-1zM635,223h1v1h-1zM635,217h1v1h-1zM635,211h1v1h-1zM635,205h1v1h-1zM635,199h1v1h-1zM635,193h1v1h-1zM635,187h1v1h-1zM635,181h1v1h-1zM635,175h1v1h-1zM635,169h1v1h-1zM635,163h1v1h-1z"/>
</g>
<g font-size="10.67" fill="#000" text-anchor="end">
<text x="120.5" y="516.3">0</text>
<text x="120.5" y="457.3">10000</text>
<text x="120.5" y="398.3">20000</text>
<text x="120.5" y="339.3">30000</text>
<text x="120.5" y="280.3">40000</text>
<text x="120.5" y="221.3">50000</text>
<text x="120.5" y="162.3">60000</text>
</g>
<g font-size="10.67" fill="#000" text-anchor="middle">
<text x="124.5" y="531">0</text>
<text x="188.5" y="531">100</text>
<text x="252.5" y="531">200</text>
<text x="316.5" y="531">300</text>
<text x="380.5" y="531">400</text>
<text x="443.5" y="531">500</text>
<text x="507.5" y="531">600</text>
<text x="571.5" y="531">700</text>
<text x="635.5" y="531">800</text>
<text x="699.5" y="531">900</text>
</g>
<text x="384" y="120" font-size="11" font-weight="bold" text-anchor="middle" id="ctitle"><tspan style="letter-spacing:.1px">Equity Curve Line - @SM 89 Tick Bar</tspan><tspan style="letter-spacing:-.09px">(6/7/2016 13:14:45 - 2/9/2017 13:19:58)</tspan></text>
<text x="411.2" y="556" font-size="15.700" text-anchor="middle" id="xt">Trade Number</text>
<text transform="translate(77.9,333.2) rotate(-90)" font-size="16.1" text-anchor="middle" id="yt">Equity($)</text>
<polyline points="124.8,510.0 125.6,509.0 128.4,503.5 132.8,501.9 133.3,504.7 133.8,505.7 134.9,507.4 136.0,505.7 136.9,507.4 137.4,504.6 138.0,503.5 139.3,501.9 140.4,498.0 144.8,498.0 145.9,499.7 146.2,502.8 146.4,504.0 146.9,501.2 147.5,500.2 148.1,498.0 148.6,497.5 151.4,494.2 151.8,494.9 152.3,498.4 152.7,499.1 154.1,500.2 155.7,498.6 156.8,500.2 157.8,497.4 158.8,496.4 159.4,497.4 160.1,500.2 160.6,501.0 161.2,503.5 161.8,500.7 162.5,499.7 163.2,501.7 163.9,501.9 164.7,500.2 165.4,502.8 166.1,503.5 167.2,502.4 167.8,503.1 168.3,505.7 168.9,502.6 169.4,501.3 170.8,501.9 171.1,502.6 171.3,505.2 173.2,506.6 173.6,505.6 173.9,501.8 174.3,500.8 176.0,501.9 176.5,499.2 176.9,497.3 177.4,496.4 177.8,497.1 178.3,500.6 178.7,501.3 180.0,500.2 180.3,497.5 180.7,495.8 181.1,494.0 181.4,493.1 182.9,491.2 188.1,487.5 193.3,485.8 193.3,480.2 198.5,471.9 199.1,473.1 199.6,476.0 201.1,478.5 202.7,479.2 203.8,479.2 204.8,477.5 205.2,478.6 205.7,480.6 206.1,484.3 206.5,485.4 207.0,482.4 207.5,480.3 208.0,478.3 208.5,478.0 209.0,475.0 210.5,472.6 212.0,471.9 213.5,473.0 213.5,470.0 213.5,467.9 213.5,465.8 213.5,465.5 213.5,463.4 213.5,460.4 214.2,459.4 217.0,448.5 222.4,445.4 226.7,437.5 229.3,429.3 230.6,431.5 231.8,432.0 233.0,432.8 234.4,432.9 235.8,431.3 236.6,430.7 237.3,428.3 241.3,425.5 242.5,422.4 245.8,421.0 248.5,416.2 253.8,414.2 254.0,408.6 254.5,411.1 255.1,412.8 255.6,413.5 257.0,414.5 258.4,416.4 259.8,419.2 261.5,417.6 263.3,416.9 265.0,417.1 266.6,419.4 268.1,420.7 269.7,422.0 271.2,422.5 272.0,421.1 272.8,418.9 273.6,414.9 274.4,413.5 275.8,410.9 277.1,410.9 278.5,408.3 279.6,405.9 280.6,405.2 283.8,396.9 286.9,387.5 293.1,385.4 294.1,387.8 295.2,388.5 296.1,389.0 297.0,392.2 297.9,392.7 298.7,391.9 299.6,388.3 300.4,387.5 302.5,388.5 303.2,385.9 303.9,385.9 304.6,383.3 309.8,379.2 311.9,371.9 314.0,366.7 320.2,363.5 323.3,361.5 324.4,356.2 325.4,359.2 326.5,360.4 327.9,359.9 329.2,358.5 330.6,356.2 331.6,356.1 332.7,354.2 337.9,350.4 338.9,350.9 340.0,352.3 341.0,354.6 342.6,356.1 344.2,355.8 345.4,358.5 346.7,359.4 347.6,356.4 348.5,354.3 349.5,354.0 350.4,351.0 352.5,351.4 354.6,350.0 355.6,353.0 356.7,355.1 357.7,357.1 358.8,357.4 359.8,360.4 360.4,359.4 361.0,357.5 361.7,353.9 362.3,352.0 362.9,351.0 363.9,350.9 365.0,349.0 369.2,343.8 372.3,340.6 373.9,340.8 375.4,342.7 377.5,342.3 379.6,343.8 380.6,343.3 381.7,340.1 382.7,339.6 385.8,337.9 386.6,338.5 387.3,340.8 389.5,341.9 391.7,341.3 393.6,343.5 395.5,344.0 396.2,346.8 396.9,346.8 397.5,348.6 398.2,351.4 398.8,350.0 399.3,346.8 400.4,346.0 401.5,343.5 402.6,346.0 403.7,346.8 404.8,345.4 405.9,345.7 407.0,348.5 408.1,350.4 409.2,352.4 410.3,353.4 410.8,352.1 411.4,349.9 411.9,345.9 412.5,343.7 413.0,342.4 413.6,344.0 414.6,341.0 415.7,339.7 416.8,339.4 417.9,340.8 419.0,339.2 420.1,339.3 421.2,339.4 422.3,341.3 424.5,340.8 425.3,342.1 426.1,345.1 426.9,346.2 427.8,350.0 428.6,350.2 429.4,353.1 430.8,353.0 432.1,351.2 433.8,350.4 435.4,347.9 436.8,347.8 438.2,349.5 439.5,348.1 440.9,348.4 441.4,347.6 442.0,345.1 444.0,346.2 444.6,345.3 445.2,343.4 445.8,339.8 446.4,338.9 448.0,339.2 449.6,341.3 451.6,343.3 453.5,343.5 454.9,343.3 456.2,341.3 457.7,341.1 459.2,339.1 459.7,338.1 460.2,335.4 462.6,333.6 464.0,335.7 465.4,336.0 465.9,333.6 466.5,333.0 467.5,332.3 468.5,329.8 472.7,324.6 474.8,319.4 482.1,316.7 485.2,317.9 488.3,315.2 493.5,310.0 496.7,304.8 502.6,298.8 504.1,300.7 505.7,299.9 507.2,301.8 508.8,299.5 510.5,298.1 512.1,297.6 515.0,292.7 521.2,293.1 522.1,293.2 523.0,295.0 524.0,294.2 524.9,290.8 525.9,290.0 527.0,283.0 530.1,276.5 535.3,274.2 537.8,268.9 541.7,265.4 542.3,262.9 543.5,263.5 544.8,265.8 546.4,266.5 548.0,265.4 549.0,263.7 550.0,263.8 555.2,262.9 558.3,260.2 561.0,258.1 562.2,259.1 563.5,261.9 565.1,260.7 566.7,261.2 567.7,259.3 568.8,259.2 570.3,258.8 571.9,260.2 573.1,259.2 574.4,256.5 574.9,256.3 576.5,256.3 578.1,258.1 579.5,258.1 580.9,259.0 582.3,260.8 584.0,261.5 585.8,259.5 587.5,260.2 588.5,259.3 589.6,256.7 595.8,254.6 596.9,248.8 600.0,240.4 601.0,243.4 602.1,244.6 603.5,247.2 604.9,249.0 606.2,249.8 608.1,249.6 610.0,251.2 610.6,248.4 611.2,248.3 611.9,246.3 612.5,243.5 613.5,242.3 614.6,239.4 617.7,232.1 620.8,226.9 623.3,219.6 624.6,221.0 626.0,220.6 626.7,219.8 627.4,216.2 628.1,215.4 631.2,210.8 632.8,211.2 634.4,213.3 636.0,211.9 637.5,212.3 639.6,213.3 640.7,212.7 641.7,210.2 642.7,210.2 643.6,208.3 645.6,206.6 646.7,208.7 647.8,209.0 649.6,206.8 651.5,206.4 653.0,207.0 654.6,209.5 655.4,210.1 656.2,213.4 657.0,214.0 658.6,212.5 660.2,212.9 661.8,212.5 663.3,214.0 665.4,214.9 667.5,214.0 669.0,212.0 670.6,211.9 671.7,211.2 672.7,208.8 674.8,209.1 676.9,207.7 678.2,206.3 679.6,206.7 680.4,202.0 684.2,201.5 686.7,199.8" fill="none" stroke="#000" stroke-width="1" shape-rendering="crispEdges"/>
<path d="M122.2,510.0a2.6,2.6 0 1,0 5.2,0a2.6,2.6 0 1,0 -5.2,0z M123.0,509.0a2.6,2.6 0 1,0 5.2,0a2.6,2.6 0 1,0 -5.2,0z M123.4,507.6a2.6,2.6 0 1,0 5.2,0a2.6,2.6 0 1,0 -5.2,0z M124.2,506.8a2.6,2.6 0 1,0 5.2,0a2.6,2.6 0 1,0 -5.2,0z M124.8,505.8a2.6,2.6 0 1,0 5.2,0a2.6,2.6 0 1,0 -5.2,0z M125.6,504.9a2.6,2.6 0 1,0 5.2,0a2.6,2.6 0 1,0 -5.2,0z M125.8,503.5a2.6,2.6 0 1,0 5.2,0a2.6,2.6 0 1,0 -5.2,0z M126.5,502.8a2.6,2.6 0 1,0 5.2,0a2.6,2.6 0 1,0 -5.2,0z M127.9,503.1a2.6,2.6 0 1,0 5.2,0a2.6,2.6 0 1,0 -5.2,0z M128.7,502.3a2.6,2.6 0 1,0 5.2,0a2.6,2.6 0 1,0 -5.2,0z M130.2,501.9a2.6,2.6 0 1,0 5.2,0a2.6,2.6 0 1,0 -5.2,0z M136.7,501.9a2.6,2.6 0 1,0 5.2,0a2.6,2.6 0 1,0 -5.2,0z M137.3,501.5a2.6,2.6 0 1,0 5.2,0a2.6,2.6 0 1,0 -5.2,0z M137.6,499.9a2.6,2.6 0 1,0 5.2,0a2.6,2.6 0 1,0 -5.2,0z M137.2,499.1a2.6,2.6 0 1,0 5.2,0a2.6,2.6 0 1,0 -5.2,0z M137.8,498.0a2.6,2.6 0 1,0 5.2,0a2.6,2.6 0 1,0 -5.2,0z M138.7,498.4a2.6,2.6 0 1,0 5.2,0a2.6,2.6 0 1,0 -5.2,0z M140.3,497.8a2.6,2.6 0 1,0 5.2,0a2.6,2.6 0 1,0 -5.2,0z M141.7,497.5a2.6,2.6 0 1,0 5.2,0a2.6,2.6 0 1,0 -5.2,0z M142.2,498.0a2.6,2.6 0 1,0 5.2,0a2.6,2.6 0 1,0 -5.2,0z M142.3,498.8a2.6,2.6 0 1,0 5.2,0a2.6,2.6 0 1,0 -5.2,0z M143.3,499.7a2.6,2.6 0 1,0 5.2,0a2.6,2.6 0 1,0 -5.2,0z M146.0,497.5a2.6,2.6 0 1,0 5.2,0a2.6,2.6 0 1,0 -5.2,0z M146.5,496.7a2.6,2.6 0 1,0 5.2,0a2.6,2.6 0 1,0 -5.2,0z M148.0,496.0a2.6,2.6 0 1,0 5.2,0a2.6,2.6 0 1,0 -5.2,0z M147.5,495.5a2.6,2.6 0 1,0 5.2,0a2.6,2.6 0 1,0 -5.2,0z M148.8,494.2a2.6,2.6 0 1,0 5.2,0a2.6,2.6 0 1,0 -5.2,0z M180.3,491.2a2.6,2.6 0 1,0 5.2,0a2.6,2.6 0 1,0 -5.2,0z M181.2,490.7a2.6,2.6 0 1,0 5.2,0a2.6,2.6 0 1,0 -5.2,0z M182.8,489.3a2.6,2.6 0 1,0 5.2,0a2.6,2.6 0 1,0 -5.2,0z M183.3,489.3a2.6,2.6 0 1,0 5.2,0a2.6,2.6 0 1,0 -5.2,0z M184.1,488.7a2.6,2.6 0 1,0 5.2,0a2.6,2.6 0 1,0 -5.2,0z M185.5,487.5a2.6,2.6 0 1,0 5.2,0a2.6,2.6 0 1,0 -5.2,0z M186.5,487.3a2.6,2.6 0 1,0 5.2,0a2.6,2.6 0 1,0 -5.2,0z M187.1,487.4a2.6,2.6 0 1,0 5.2,0a2.6,2.6 0 1,0 -5.2,0z M188.9,486.4a2.6,2.6 0 1,0 5.2,0a2.6,2.6 0 1,0 -5.2,0z M190.0,485.6a2.6,2.6 0 1,0 5.2,0a2.6,2.6 0 1,0 -5.2,0z M190.7,485.8a2.6,2.6 0 1,0 5.2,0a2.6,2.6 0 1,0 -5.2,0z M190.3,485.3a2.6,2.6 0 1,0 5.2,0a2.6,2.6 0 1,0 -5.2,0z M190.1,483.7a2.6,2.6 0 1,0 5.2,0a2.6,2.6 0 1,0 -5.2,0z M190.7,482.6a2.6,2.6 0 1,0 5.2,0a2.6,2.6 0 1,0 -5.2,0z M190.8,481.4a2.6,2.6 0 1,0 5.2,0a2.6,2.6 0 1,0 -5.2,0z M190.7,480.2a2.6,2.6 0 1,0 5.2,0a2.6,2.6 0 1,0 -5.2,0z M191.3,479.7a2.6,2.6 0 1,0 5.2,0a2.6,2.6 0 1,0 -5.2,0z M191.6,478.2a2.6,2.6 0 1,0 5.2,0a2.6,2.6 0 1,0 -5.2,0z M192.1,477.4a2.6,2.6 0 1,0 5.2,0a2.6,2.6 0 1,0 -5.2,0z M193.6,475.6a2.6,2.6 0 1,0 5.2,0a2.6,2.6 0 1,0 -5.2,0z M194.2,474.6a2.6,2.6 0 1,0 5.2,0a2.6,2.6 0 1,0 -5.2,0z M195.2,473.6a2.6,2.6 0 1,0 5.2,0a2.6,2.6 0 1,0 -5.2,0z M195.7,472.4a2.6,2.6 0 1,0 5.2,0a2.6,2.6 0 1,0 -5.2,0z M195.9,471.9a2.6,2.6 0 1,0 5.2,0a2.6,2.6 0 1,0 -5.2,0z M211.6,459.4a2.6,2.6 0 1,0 5.2,0a2.6,2.6 0 1,0 -5.2,0z M211.6,458.2a2.6,2.6 0 1,0 5.2,0a2.6,2.6 0 1,0 -5.2,0z M212.5,456.8a2.6,2.6 0 1,0 5.2,0a2.6,2.6 0 1,0 -5.2,0z M212.6,456.2a2.6,2.6 0 1,0 5.2,0a2.6,2.6 0 1,0 -5.2,0z M212.3,454.8a2.6,2.6 0 1,0 5.2,0a2.6,2.6 0 1,0 -5.2,0z M213.6,453.5a2.6,2.6 0 1,0 5.2,0a2.6,2.6 0 1,0 -5.2,0z M213.8,452.2a2.6,2.6 0 1,0 5.2,0a2.6,2.6 0 1,0 -5.2,0z M214.2,451.4a2.6,2.6 0 1,0 5.2,0a2.6,2.6 0 1,0 -5.2,0z M213.6,449.3a2.6,2.6 0 1,0 5.2,0a2.6,2.6 0 1,0 -5.2,0z M214.4,448.5a2.6,2.6 0 1,0 5.2,0a2.6,2.6 0 1,0 -5.2,0z M215.5,448.3a2.6,2.6 0 1,0 5.2,0a2.6,2.6 0 1,0 -5.2,0z M216.9,447.4a2.6,2.6 0 1,0 5.2,0a2.6,2.6 0 1,0 -5.2,0z M218.0,446.2a2.6,2.6 0 1,0 5.2,0a2.6,2.6 0 1,0 -5.2,0z M218.3,446.2a2.6,2.6 0 1,0 5.2,0a2.6,2.6 0 1,0 -5.2,0z M219.8,445.4a2.6,2.6 0 1,0 5.2,0a2.6,2.6 0 1,0 -5.2,0z M220.0,443.7a2.6,2.6 0 1,0 5.2,0a2.6,2.6 0 1,0 -5.2,0z M221.2,443.2a2.6,2.6 0 1,0 5.2,0a2.6,2.6 0 1,0 -5.2,0z M221.6,442.3a2.6,2.6 0 1,0 5.2,0a2.6,2.6 0 1,0 -5.2,0z M222.7,440.4a2.6,2.6 0 1,0 5.2,0a2.6,2.6 0 1,0 -5.2,0z M222.5,439.2a2.6,2.6 0 1,0 5.2,0a2.6,2.6 0 1,0 -5.2,0z M223.0,438.6a2.6,2.6 0 1,0 5.2,0a2.6,2.6 0 1,0 -5.2,0z M224.1,437.5a2.6,2.6 0 1,0 5.2,0a2.6,2.6 0 1,0 -5.2,0z M223.9,436.8a2.6,2.6 0 1,0 5.2,0a2.6,2.6 0 1,0 -5.2,0z M224.3,434.9a2.6,2.6 0 1,0 5.2,0a2.6,2.6 0 1,0 -5.2,0z M225.8,434.1a2.6,2.6 0 1,0 5.2,0a2.6,2.6 0 1,0 -5.2,0z M225.2,432.5a2.6,2.6 0 1,0 5.2,0a2.6,2.6 0 1,0 -5.2,0z M226.0,432.0a2.6,2.6 0 1,0 5.2,0a2.6,2.6 0 1,0 -5.2,0z M226.3,430.2a2.6,2.6 0 1,0 5.2,0a2.6,2.6 0 1,0 -5.2,0z M226.7,429.3a2.6,2.6 0 1,0 5.2,0a2.6,2.6 0 1,0 -5.2,0z M234.7,428.3a2.6,2.6 0 1,0 5.2,0a2.6,2.6 0 1,0 -5.2,0z M235.7,428.1a2.6,2.6 0 1,0 5.2,0a2.6,2.6 0 1,0 -5.2,0z M237.2,427.4a2.6,2.6 0 1,0 5.2,0a2.6,2.6 0 1,0 -5.2,0z M238.2,425.8a2.6,2.6 0 1,0 5.2,0a2.6,2.6 0 1,0 -5.2,0z M238.7,425.5a2.6,2.6 0 1,0 5.2,0a2.6,2.6 0 1,0 -5.2,0z M239.0,424.4a2.6,2.6 0 1,0 5.2,0a2.6,2.6 0 1,0 -5.2,0z M239.4,423.2a2.6,2.6 0 1,0 5.2,0a2.6,2.6 0 1,0 -5.2,0z M239.9,422.4a2.6,2.6 0 1,0 5.2,0a2.6,2.6 0 1,0 -5.2,0z M241.2,421.8a2.6,2.6 0 1,0 5.2,0a2.6,2.6 0 1,0 -5.2,0z M241.8,421.2a2.6,2.6 0 1,0 5.2,0a2.6,2.6 0 1,0 -5.2,0z M243.2,421.0a2.6,2.6 0 1,0 5.2,0a2.6,2.6 0 1,0 -5.2,0z M243.3,420.4a2.6,2.6 0 1,0 5.2,0a2.6,2.6 0 1,0 -5.2,0z M244.8,419.3a2.6,2.6 0 1,0 5.2,0a2.6,2.6 0 1,0 -5.2,0z M244.7,417.9a2.6,2.6 0 1,0 5.2,0a2.6,2.6 0 1,0 -5.2,0z M244.9,417.2a2.6,2.6 0 1,0 5.2,0a2.6,2.6 0 1,0 -5.2,0z M245.9,416.2a2.6,2.6 0 1,0 5.2,0a2.6,2.6 0 1,0 -5.2,0z M247.2,415.4a2.6,2.6 0 1,0 5.2,0a2.6,2.6 0 1,0 -5.2,0z M248.5,415.0a2.6,2.6 0 1,0 5.2,0a2.6,2.6 0 1,0 -5.2,0z M249.3,414.7a2.6,2.6 0 1,0 5.2,0a2.6,2.6 0 1,0 -5.2,0z M250.3,415.2a2.6,2.6 0 1,0 5.2,0a2.6,2.6 0 1,0 -5.2,0z M251.2,414.2a2.6,2.6 0 1,0 5.2,0a2.6,2.6 0 1,0 -5.2,0z M251.1,413.0a2.6,2.6 0 1,0 5.2,0a2.6,2.6 0 1,0 -5.2,0z M251.1,411.5a2.6,2.6 0 1,0 5.2,0a2.6,2.6 0 1,0 -5.2,0z M251.1,410.6a2.6,2.6 0 1,0 5.2,0a2.6,2.6 0 1,0 -5.2,0z M251.3,410.0a2.6,2.6 0 1,0 5.2,0a2.6,2.6 0 1,0 -5.2,0z M251.4,408.6a2.6,2.6 0 1,0 5.2,0a2.6,2.6 0 1,0 -5.2,0z M278.0,405.2a2.6,2.6 0 1,0 5.2,0a2.6,2.6 0 1,0 -5.2,0z M278.3,404.0a2.6,2.6 0 1,0 5.2,0a2.6,2.6 0 1,0 -5.2,0z M278.7,403.4a2.6,2.6 0 1,0 5.2,0a2.6,2.6 0 1,0 -5.2,0z M278.9,402.1a2.6,2.6 0 1,0 5.2,0a2.6,2.6 0 1,0 -5.2,0z M279.5,400.9a2.6,2.6 0 1,0 5.2,0a2.6,2.6 0 1,0 -5.2,0z M279.8,399.0a2.6,2.6 0 1,0 5.2,0a2.6,2.6 0 1,0 -5.2,0z M281.2,397.7a2.6,2.6 0 1,0 5.2,0a2.6,2.6 0 1,0 -5.2,0z M281.1,396.9a2.6,2.6 0 1,0 5.2,0a2.6,2.6 0 1,0 -5.2,0z M281.9,396.1a2.6,2.6 0 1,0 5.2,0a2.6,2.6 0 1,0 -5.2,0z M282.4,394.8a2.6,2.6 0 1,0 5.2,0a2.6,2.6 0 1,0 -5.2,0z M282.9,393.3a2.6,2.6 0 1,0 5.2,0a2.6,2.6 0 1,0 -5.2,0z M282.8,392.2a2.6,2.6 0 1,0 5.2,0a2.6,2.6 0 1,0 -5.2,0z M283.1,390.8a2.6,2.6 0 1,0 5.2,0a2.6,2.6 0 1,0 -5.2,0z M283.2,390.2a2.6,2.6 0 1,0 5.2,0a2.6,2.6 0 1,0 -5.2,0z M283.5,389.1a2.6,2.6 0 1,0 5.2,0a2.6,2.6 0 1,0 -5.2,0z M284.3,387.5a2.6,2.6 0 1,0 5.2,0a2.6,2.6 0 1,0 -5.2,0z M285.1,386.6a2.6,2.6 0 1,0 5.2,0a2.6,2.6 0 1,0 -5.2,0z M285.9,386.5a2.6,2.6 0 1,0 5.2,0a2.6,2.6 0 1,0 -5.2,0z M287.5,386.1a2.6,2.6 0 1,0 5.2,0a2.6,2.6 0 1,0 -5.2,0z M288.2,385.6a2.6,2.6 0 1,0 5.2,0a2.6,2.6 0 1,0 -5.2,0z M288.9,386.3a2.6,2.6 0 1,0 5.2,0a2.6,2.6 0 1,0 -5.2,0z M290.5,385.4a2.6,2.6 0 1,0 5.2,0a2.6,2.6 0 1,0 -5.2,0z M302.0,383.3a2.6,2.6 0 1,0 5.2,0a2.6,2.6 0 1,0 -5.2,0z M302.8,383.1a2.6,2.6 0 1,0 5.2,0a2.6,2.6 0 1,0 -5.2,0z M303.9,381.4a2.6,2.6 0 1,0 5.2,0a2.6,2.6 0 1,0 -5.2,0z M304.9,381.8a2.6,2.6 0 1,0 5.2,0a2.6,2.6 0 1,0 -5.2,0z M306.0,380.3a2.6,2.6 0 1,0 5.2,0a2.6,2.6 0 1,0 -5.2,0z M306.0,380.4a2.6,2.6 0 1,0 5.2,0a2.6,2.6 0 1,0 -5.2,0z M307.2,379.2a2.6,2.6 0 1,0 5.2,0a2.6,2.6 0 1,0 -5.2,0z M307.7,378.0a2.6,2.6 0 1,0 5.2,0a2.6,2.6 0 1,0 -5.2,0z M307.5,376.7a2.6,2.6 0 1,0 5.2,0a2.6,2.6 0 1,0 -5.2,0z M308.5,375.3a2.6,2.6 0 1,0 5.2,0a2.6,2.6 0 1,0 -5.2,0z M309.0,374.9a2.6,2.6 0 1,0 5.2,0a2.6,2.6 0 1,0 -5.2,0z M308.4,372.5a2.6,2.6 0 1,0 5.2,0a2.6,2.6 0 1,0 -5.2,0z M309.3,371.9a2.6,2.6 0 1,0 5.2,0a2.6,2.6 0 1,0 -5.2,0z M309.7,371.4a2.6,2.6 0 1,0 5.2,0a2.6,2.6 0 1,0 -5.2,0z M310.2,369.5a2.6,2.6 0 1,0 5.2,0a2.6,2.6 0 1,0 -5.2,0z M310.5,369.0a2.6,2.6 0 1,0 5.2,0a2.6,2.6 0 1,0 -5.2,0z M311.2,367.9a2.6,2.6 0 1,0 5.2,0a2.6,2.6 0 1,0 -5.2,0z M311.4,366.7a2.6,2.6 0 1,0 5.2,0a2.6,2.6 0 1,0 -5.2,0z M312.5,366.6a2.6,2.6 0 1,0 5.2,0a2.6,2.6 0 1,0 -5.2,0z M314.0,365.4a2.6,2.6 0 1,0 5.2,0a2.6,2.6 0 1,0 -5.2,0z M314.2,364.8a2.6,2.6 0 1,0 5.2,0a2.6,2.6 0 1,0 -5.2,0z M315.2,365.0a2.6,2.6 0 1,0 5.2,0a2.6,2.6 0 1,0 -5.2,0z M316.8,363.6a2.6,2.6 0 1,0 5.2,0a2.6,2.6 0 1,0 -5.2,0z M317.6,363.5a2.6,2.6 0 1,0 5.2,0a2.6,2.6 0 1,0 -5.2,0z M319.2,363.4a2.6,2.6 0 1,0 5.2,0a2.6,2.6 0 1,0 -5.2,0z M320.1,361.6a2.6,2.6 0 1,0 5.2,0a2.6,2.6 0 1,0 -5.2,0z M320.7,361.5a2.6,2.6 0 1,0 5.2,0a2.6,2.6 0 1,0 -5.2,0z M321.1,360.9a2.6,2.6 0 1,0 5.2,0a2.6,2.6 0 1,0 -5.2,0z M321.1,358.9a2.6,2.6 0 1,0 5.2,0a2.6,2.6 0 1,0 -5.2,0z M321.6,358.2a2.6,2.6 0 1,0 5.2,0a2.6,2.6 0 1,0 -5.2,0z M321.6,357.9a2.6,2.6 0 1,0 5.2,0a2.6,2.6 0 1,0 -5.2,0z M321.8,356.2a2.6,2.6 0 1,0 5.2,0a2.6,2.6 0 1,0 -5.2,0z M330.1,354.2a2.6,2.6 0 1,0 5.2,0a2.6,2.6 0 1,0 -5.2,0z M331.3,353.7a2.6,2.6 0 1,0 5.2,0a2.6,2.6 0 1,0 -5.2,0z M331.6,352.3a2.6,2.6 0 1,0 5.2,0a2.6,2.6 0 1,0 -5.2,0z M332.9,351.3a2.6,2.6 0 1,0 5.2,0a2.6,2.6 0 1,0 -5.2,0z M334.1,351.0a2.6,2.6 0 1,0 5.2,0a2.6,2.6 0 1,0 -5.2,0z M335.3,350.4a2.6,2.6 0 1,0 5.2,0a2.6,2.6 0 1,0 -5.2,0z M362.4,349.0a2.6,2.6 0 1,0 5.2,0a2.6,2.6 0 1,0 -5.2,0z M363.7,347.9a2.6,2.6 0 1,0 5.2,0a2.6,2.6 0 1,0 -5.2,0z M363.2,347.7a2.6,2.6 0 1,0 5.2,0a2.6,2.6 0 1,0 -5.2,0z M364.2,346.0a2.6,2.6 0 1,0 5.2,0a2.6,2.6 0 1,0 -5.2,0z M365.0,345.0a2.6,2.6 0 1,0 5.2,0a2.6,2.6 0 1,0 -5.2,0z M365.6,344.8a2.6,2.6 0 1,0 5.2,0a2.6,2.6 0 1,0 -5.2,0z M366.6,343.8a2.6,2.6 0 1,0 5.2,0a2.6,2.6 0 1,0 -5.2,0z M367.1,343.3a2.6,2.6 0 1,0 5.2,0a2.6,2.6 0 1,0 -5.2,0z M367.7,342.6a2.6,2.6 0 1,0 5.2,0a2.6,2.6 0 1,0 -5.2,0z M368.5,341.5a2.6,2.6 0 1,0 5.2,0a2.6,2.6 0 1,0 -5.2,0z M369.7,340.6a2.6,2.6 0 1,0 5.2,0a2.6,2.6 0 1,0 -5.2,0z M380.1,339.6a2.6,2.6 0 1,0 5.2,0a2.6,2.6 0 1,0 -5.2,0z M381.0,338.8a2.6,2.6 0 1,0 5.2,0a2.6,2.6 0 1,0 -5.2,0z M382.3,338.0a2.6,2.6 0 1,0 5.2,0a2.6,2.6 0 1,0 -5.2,0z M383.2,337.9a2.6,2.6 0 1,0 5.2,0a2.6,2.6 0 1,0 -5.2,0z M457.6,335.4a2.6,2.6 0 1,0 5.2,0a2.6,2.6 0 1,0 -5.2,0z M458.9,335.2a2.6,2.6 0 1,0 5.2,0a2.6,2.6 0 1,0 -5.2,0z M458.8,334.7a2.6,2.6 0 1,0 5.2,0a2.6,2.6 0 1,0 -5.2,0z M460.0,333.6a2.6,2.6 0 1,0 5.2,0a2.6,2.6 0 1,0 -5.2,0z M465.9,329.8a2.6,2.6 0 1,0 5.2,0a2.6,2.6 0 1,0 -5.2,0z M466.9,329.0a2.6,2.6 0 1,0 5.2,0a2.6,2.6 0 1,0 -5.2,0z M467.6,328.3a2.6,2.6 0 1,0 5.2,0a2.6,2.6 0 1,0 -5.2,0z M468.0,326.9a2.6,2.6 0 1,0 5.2,0a2.6,2.6 0 1,0 -5.2,0z M468.8,325.9a2.6,2.6 0 1,0 5.2,0a2.6,2.6 0 1,0 -5.2,0z M469.8,325.7a2.6,2.6 0 1,0 5.2,0a2.6,2.6 0 1,0 -5.2,0z M470.1,324.6a2.6,2.6 0 1,0 5.2,0a2.6,2.6 0 1,0 -5.2,0z M470.5,323.5a2.6,2.6 0 1,0 5.2,0a2.6,2.6 0 1,0 -5.2,0z M471.2,322.5a2.6,2.6 0 1,0 5.2,0a2.6,2.6 0 1,0 -5.2,0z M471.9,321.8a2.6,2.6 0 1,0 5.2,0a2.6,2.6 0 1,0 -5.2,0z M471.9,320.8a2.6,2.6 0 1,0 5.2,0a2.6,2.6 0 1,0 -5.2,0z M472.2,319.4a2.6,2.6 0 1,0 5.2,0a2.6,2.6 0 1,0 -5.2,0z M472.8,319.2a2.6,2.6 0 1,0 5.2,0a2.6,2.6 0 1,0 -5.2,0z M475.0,318.8a2.6,2.6 0 1,0 5.2,0a2.6,2.6 0 1,0 -5.2,0z M476.4,318.2a2.6,2.6 0 1,0 5.2,0a2.6,2.6 0 1,0 -5.2,0z M476.6,317.1a2.6,2.6 0 1,0 5.2,0a2.6,2.6 0 1,0 -5.2,0z M478.4,317.7a2.6,2.6 0 1,0 5.2,0a2.6,2.6 0 1,0 -5.2,0z M479.5,316.7a2.6,2.6 0 1,0 5.2,0a2.6,2.6 0 1,0 -5.2,0z M480.4,317.0a2.6,2.6 0 1,0 5.2,0a2.6,2.6 0 1,0 -5.2,0z M481.0,316.9a2.6,2.6 0 1,0 5.2,0a2.6,2.6 0 1,0 -5.2,0z M482.6,317.9a2.6,2.6 0 1,0 5.2,0a2.6,2.6 0 1,0 -5.2,0z M483.4,316.9a2.6,2.6 0 1,0 5.2,0a2.6,2.6 0 1,0 -5.2,0z M483.9,316.5a2.6,2.6 0 1,0 5.2,0a2.6,2.6 0 1,0 -5.2,0z M484.4,316.4a2.6,2.6 0 1,0 5.2,0a2.6,2.6 0 1,0 -5.2,0z M485.7,315.2a2.6,2.6 0 1,0 5.2,0a2.6,2.6 0 1,0 -5.2,0z M487.0,313.8a2.6,2.6 0 1,0 5.2,0a2.6,2.6 0 1,0 -5.2,0z M487.5,313.8a2.6,2.6 0 1,0 5.2,0a2.6,2.6 0 1,0 -5.2,0z M488.3,313.0a2.6,2.6 0 1,0 5.2,0a2.6,2.6 0 1,0 -5.2,0z M489.6,311.4a2.6,2.6 0 1,0 5.2,0a2.6,2.6 0 1,0 -5.2,0z M490.3,310.5a2.6,2.6 0 1,0 5.2,0a2.6,2.6 0 1,0 -5.2,0z M490.9,310.0a2.6,2.6 0 1,0 5.2,0a2.6,2.6 0 1,0 -5.2,0z M491.7,308.9a2.6,2.6 0 1,0 5.2,0a2.6,2.6 0 1,0 -5.2,0z M492.6,307.4a2.6,2.6 0 1,0 5.2,0a2.6,2.6 0 1,0 -5.2,0z M493.3,306.6a2.6,2.6 0 1,0 5.2,0a2.6,2.6 0 1,0 -5.2,0z M492.9,306.0a2.6,2.6 0 1,0 5.2,0a2.6,2.6 0 1,0 -5.2,0z M494.1,304.8a2.6,2.6 0 1,0 5.2,0a2.6,2.6 0 1,0 -5.2,0z M494.6,304.1a2.6,2.6 0 1,0 5.2,0a2.6,2.6 0 1,0 -5.2,0z M495.6,303.3a2.6,2.6 0 1,0 5.2,0a2.6,2.6 0 1,0 -5.2,0z M496.9,302.4a2.6,2.6 0 1,0 5.2,0a2.6,2.6 0 1,0 -5.2,0z M497.0,301.4a2.6,2.6 0 1,0 5.2,0a2.6,2.6 0 1,0 -5.2,0z M498.3,301.1a2.6,2.6 0 1,0 5.2,0a2.6,2.6 0 1,0 -5.2,0z M498.7,299.3a2.6,2.6 0 1,0 5.2,0a2.6,2.6 0 1,0 -5.2,0z M500.0,298.8a2.6,2.6 0 1,0 5.2,0a2.6,2.6 0 1,0 -5.2,0z M509.5,297.6a2.6,2.6 0 1,0 5.2,0a2.6,2.6 0 1,0 -5.2,0z M510.1,296.9a2.6,2.6 0 1,0 5.2,0a2.6,2.6 0 1,0 -5.2,0z M510.4,295.6a2.6,2.6 0 1,0 5.2,0a2.6,2.6 0 1,0 -5.2,0z M511.6,295.3a2.6,2.6 0 1,0 5.2,0a2.6,2.6 0 1,0 -5.2,0z M511.9,293.5a2.6,2.6 0 1,0 5.2,0a2.6,2.6 0 1,0 -5.2,0z M512.4,292.7a2.6,2.6 0 1,0 5.2,0a2.6,2.6 0 1,0 -5.2,0z M513.1,292.7a2.6,2.6 0 1,0 5.2,0a2.6,2.6 0 1,0 -5.2,0z M514.6,292.4a2.6,2.6 0 1,0 5.2,0a2.6,2.6 0 1,0 -5.2,0z M516.1,293.5a2.6,2.6 0 1,0 5.2,0a2.6,2.6 0 1,0 -5.2,0z M518.0,292.9a2.6,2.6 0 1,0 5.2,0a2.6,2.6 0 1,0 -5.2,0z M518.6,293.1a2.6,2.6 0 1,0 5.2,0a2.6,2.6 0 1,0 -5.2,0z M523.3,290.0a2.6,2.6 0 1,0 5.2,0a2.6,2.6 0 1,0 -5.2,0z M524.0,289.3a2.6,2.6 0 1,0 5.2,0a2.6,2.6 0 1,0 -5.2,0z M523.2,287.2a2.6,2.6 0 1,0 5.2,0a2.6,2.6 0 1,0 -5.2,0z M524.1,286.2a2.6,2.6 0 1,0 5.2,0a2.6,2.6 0 1,0 -5.2,0z M523.9,285.5a2.6,2.6 0 1,0 5.2,0a2.6,2.6 0 1,0 -5.2,0z M524.4,283.9a2.6,2.6 0 1,0 5.2,0a2.6,2.6 0 1,0 -5.2,0z M524.4,283.0a2.6,2.6 0 1,0 5.2,0a2.6,2.6 0 1,0 -5.2,0z M524.5,281.8a2.6,2.6 0 1,0 5.2,0a2.6,2.6 0 1,0 -5.2,0z M525.4,281.3a2.6,2.6 0 1,0 5.2,0a2.6,2.6 0 1,0 -5.2,0z M525.8,279.3a2.6,2.6 0 1,0 5.2,0a2.6,2.6 0 1,0 -5.2,0z M527.0,278.9a2.6,2.6 0 1,0 5.2,0a2.6,2.6 0 1,0 -5.2,0z M526.9,277.9a2.6,2.6 0 1,0 5.2,0a2.6,2.6 0 1,0 -5.2,0z M527.5,276.5a2.6,2.6 0 1,0 5.2,0a2.6,2.6 0 1,0 -5.2,0z M528.4,275.9a2.6,2.6 0 1,0 5.2,0a2.6,2.6 0 1,0 -5.2,0z M529.1,275.4a2.6,2.6 0 1,0 5.2,0a2.6,2.6 0 1,0 -5.2,0z M530.4,274.9a2.6,2.6 0 1,0 5.2,0a2.6,2.6 0 1,0 -5.2,0z M531.5,275.2a2.6,2.6 0 1,0 5.2,0a2.6,2.6 0 1,0 -5.2,0z M532.7,274.2a2.6,2.6 0 1,0 5.2,0a2.6,2.6 0 1,0 -5.2,0z M532.8,272.6a2.6,2.6 0 1,0 5.2,0a2.6,2.6 0 1,0 -5.2,0z M534.0,271.8a2.6,2.6 0 1,0 5.2,0a2.6,2.6 0 1,0 -5.2,0z M533.7,270.9a2.6,2.6 0 1,0 5.2,0a2.6,2.6 0 1,0 -5.2,0z M535.1,269.5a2.6,2.6 0 1,0 5.2,0a2.6,2.6 0 1,0 -5.2,0z M535.2,268.9a2.6,2.6 0 1,0 5.2,0a2.6,2.6 0 1,0 -5.2,0z M536.5,268.5a2.6,2.6 0 1,0 5.2,0a2.6,2.6 0 1,0 -5.2,0z M537.2,267.2a2.6,2.6 0 1,0 5.2,0a2.6,2.6 0 1,0 -5.2,0z M537.0,267.0a2.6,2.6 0 1,0 5.2,0a2.6,2.6 0 1,0 -5.2,0z M538.5,265.7a2.6,2.6 0 1,0 5.2,0a2.6,2.6 0 1,0 -5.2,0z M539.1,265.4a2.6,2.6 0 1,0 5.2,0a2.6,2.6 0 1,0 -5.2,0z M540.0,264.1a2.6,2.6 0 1,0 5.2,0a2.6,2.6 0 1,0 -5.2,0z M539.7,262.9a2.6,2.6 0 1,0 5.2,0a2.6,2.6 0 1,0 -5.2,0z M547.4,263.8a2.6,2.6 0 1,0 5.2,0a2.6,2.6 0 1,0 -5.2,0z M548.2,263.9a2.6,2.6 0 1,0 5.2,0a2.6,2.6 0 1,0 -5.2,0z M549.8,263.3a2.6,2.6 0 1,0 5.2,0a2.6,2.6 0 1,0 -5.2,0z M550.0,263.6a2.6,2.6 0 1,0 5.2,0a2.6,2.6 0 1,0 -5.2,0z M551.4,263.5a2.6,2.6 0 1,0 5.2,0a2.6,2.6 0 1,0 -5.2,0z M552.6,262.9a2.6,2.6 0 1,0 5.2,0a2.6,2.6 0 1,0 -5.2,0z M553.4,261.9a2.6,2.6 0 1,0 5.2,0a2.6,2.6 0 1,0 -5.2,0z M553.6,262.1a2.6,2.6 0 1,0 5.2,0a2.6,2.6 0 1,0 -5.2,0z M554.8,261.0a2.6,2.6 0 1,0 5.2,0a2.6,2.6 0 1,0 -5.2,0z M555.7,260.2a2.6,2.6 0 1,0 5.2,0a2.6,2.6 0 1,0 -5.2,0z M556.2,259.9a2.6,2.6 0 1,0 5.2,0a2.6,2.6 0 1,0 -5.2,0z M557.5,259.3a2.6,2.6 0 1,0 5.2,0a2.6,2.6 0 1,0 -5.2,0z M558.4,258.1a2.6,2.6 0 1,0 5.2,0a2.6,2.6 0 1,0 -5.2,0z M571.8,256.5a2.6,2.6 0 1,0 5.2,0a2.6,2.6 0 1,0 -5.2,0z M572.3,256.3a2.6,2.6 0 1,0 5.2,0a2.6,2.6 0 1,0 -5.2,0z M587.0,256.7a2.6,2.6 0 1,0 5.2,0a2.6,2.6 0 1,0 -5.2,0z M588.1,256.0a2.6,2.6 0 1,0 5.2,0a2.6,2.6 0 1,0 -5.2,0z M589.0,255.7a2.6,2.6 0 1,0 5.2,0a2.6,2.6 0 1,0 -5.2,0z M589.8,255.9a2.6,2.6 0 1,0 5.2,0a2.6,2.6 0 1,0 -5.2,0z M591.3,255.2a2.6,2.6 0 1,0 5.2,0a2.6,2.6 0 1,0 -5.2,0z M591.9,254.9a2.6,2.6 0 1,0 5.2,0a2.6,2.6 0 1,0 -5.2,0z M593.2,254.6a2.6,2.6 0 1,0 5.2,0a2.6,2.6 0 1,0 -5.2,0z M593.6,253.0a2.6,2.6 0 1,0 5.2,0a2.6,2.6 0 1,0 -5.2,0z M593.8,251.8a2.6,2.6 0 1,0 5.2,0a2.6,2.6 0 1,0 -5.2,0z M593.9,251.5a2.6,2.6 0 1,0 5.2,0a2.6,2.6 0 1,0 -5.2,0z M594.1,249.9a2.6,2.6 0 1,0 5.2,0a2.6,2.6 0 1,0 -5.2,0z M594.3,248.8a2.6,2.6 0 1,0 5.2,0a2.6,2.6 0 1,0 -5.2,0z M594.5,247.9a2.6,2.6 0 1,0 5.2,0a2.6,2.6 0 1,0 -5.2,0z M595.1,246.4a2.6,2.6 0 1,0 5.2,0a2.6,2.6 0 1,0 -5.2,0z M595.3,244.8a2.6,2.6 0 1,0 5.2,0a2.6,2.6 0 1,0 -5.2,0z M596.1,243.8a2.6,2.6 0 1,0 5.2,0a2.6,2.6 0 1,0 -5.2,0z M596.4,243.2a2.6,2.6 0 1,0 5.2,0a2.6,2.6 0 1,0 -5.2,0z M596.6,241.0a2.6,2.6 0 1,0 5.2,0a2.6,2.6 0 1,0 -5.2,0z M597.4,240.4a2.6,2.6 0 1,0 5.2,0a2.6,2.6 0 1,0 -5.2,0z M612.0,239.4a2.6,2.6 0 1,0 5.2,0a2.6,2.6 0 1,0 -5.2,0z M612.9,238.2a2.6,2.6 0 1,0 5.2,0a2.6,2.6 0 1,0 -5.2,0z M613.2,237.0a2.6,2.6 0 1,0 5.2,0a2.6,2.6 0 1,0 -5.2,0z M613.1,236.6a2.6,2.6 0 1,0 5.2,0a2.6,2.6 0 1,0 -5.2,0z M613.8,235.3a2.6,2.6 0 1,0 5.2,0a2.6,2.6 0 1,0 -5.2,0z M614.0,234.4a2.6,2.6 0 1,0 5.2,0a2.6,2.6 0 1,0 -5.2,0z M614.7,233.5a2.6,2.6 0 1,0 5.2,0a2.6,2.6 0 1,0 -5.2,0z M615.1,232.1a2.6,2.6 0 1,0 5.2,0a2.6,2.6 0 1,0 -5.2,0z M616.1,230.6a2.6,2.6 0 1,0 5.2,0a2.6,2.6 0 1,0 -5.2,0z M616.8,229.9a2.6,2.6 0 1,0 5.2,0a2.6,2.6 0 1,0 -5.2,0z M617.1,228.9a2.6,2.6 0 1,0 5.2,0a2.6,2.6 0 1,0 -5.2,0z M617.4,228.3a2.6,2.6 0 1,0 5.2,0a2.6,2.6 0 1,0 -5.2,0z M618.2,226.9a2.6,2.6 0 1,0 5.2,0a2.6,2.6 0 1,0 -5.2,0z M619.2,225.2a2.6,2.6 0 1,0 5.2,0a2.6,2.6 0 1,0 -5.2,0z M618.9,224.8a2.6,2.6 0 1,0 5.2,0a2.6,2.6 0 1,0 -5.2,0z M619.8,223.8a2.6,2.6 0 1,0 5.2,0a2.6,2.6 0 1,0 -5.2,0z M619.9,221.5a2.6,2.6 0 1,0 5.2,0a2.6,2.6 0 1,0 -5.2,0z M620.8,221.3a2.6,2.6 0 1,0 5.2,0a2.6,2.6 0 1,0 -5.2,0z M620.7,219.6a2.6,2.6 0 1,0 5.2,0a2.6,2.6 0 1,0 -5.2,0z M625.5,215.4a2.6,2.6 0 1,0 5.2,0a2.6,2.6 0 1,0 -5.2,0z M626.2,214.4a2.6,2.6 0 1,0 5.2,0a2.6,2.6 0 1,0 -5.2,0z M626.7,213.9a2.6,2.6 0 1,0 5.2,0a2.6,2.6 0 1,0 -5.2,0z M627.1,212.2a2.6,2.6 0 1,0 5.2,0a2.6,2.6 0 1,0 -5.2,0z M628.6,211.3a2.6,2.6 0 1,0 5.2,0a2.6,2.6 0 1,0 -5.2,0z M628.6,210.8a2.6,2.6 0 1,0 5.2,0a2.6,2.6 0 1,0 -5.2,0z M641.0,208.3a2.6,2.6 0 1,0 5.2,0a2.6,2.6 0 1,0 -5.2,0z M642.1,208.0a2.6,2.6 0 1,0 5.2,0a2.6,2.6 0 1,0 -5.2,0z M642.7,207.6a2.6,2.6 0 1,0 5.2,0a2.6,2.6 0 1,0 -5.2,0z M643.0,206.6a2.6,2.6 0 1,0 5.2,0a2.6,2.6 0 1,0 -5.2,0z M677.0,206.7a2.6,2.6 0 1,0 5.2,0a2.6,2.6 0 1,0 -5.2,0z M676.7,205.9a2.6,2.6 0 1,0 5.2,0a2.6,2.6 0 1,0 -5.2,0z M676.8,203.9a2.6,2.6 0 1,0 5.2,0a2.6,2.6 0 1,0 -5.2,0z M677.7,202.6a2.6,2.6 0 1,0 5.2,0a2.6,2.6 0 1,0 -5.2,0z M677.8,202.0a2.6,2.6 0 1,0 5.2,0a2.6,2.6 0 1,0 -5.2,0z M679.3,202.4a2.6,2.6 0 1,0 5.2,0a2.6,2.6 0 1,0 -5.2,0z M680.5,201.7a2.6,2.6 0 1,0 5.2,0a2.6,2.6 0 1,0 -5.2,0z M681.6,201.5a2.6,2.6 0 1,0 5.2,0a2.6,2.6 0 1,0 -5.2,0z M682.4,201.2a2.6,2.6 0 1,0 5.2,0a2.6,2.6 0 1,0 -5.2,0z M682.8,200.1a2.6,2.6 0 1,0 5.2,0a2.6,2.6 0 1,0 -5.2,0z M684.1,199.8a2.6,2.6 0 1,0 5.2,0a2.6,2.6 0 1,0 -5.2,0z" fill="#00ea00" shape-rendering="crispEdges"/>
</svg>

<!-- tabs -->
<div id="tabstrip" class="abs"></div><div id="tabline" class="abs"></div>
<div class="tab" style="left:14px;width:120px;letter-spacing:-0.21px">Performance Summary</div>
<div class="tab" style="left:134px;width:82px">Trade Analysis</div>
<div class="tab" style="left:216px;width:64px">Trades List</div>
<div class="tab" style="left:280px;width:97px;letter-spacing:-0.14px">Periodical Returns</div>
<div class="tab act" style="left:376px;width:114px;letter-spacing:-0.08px">Performance Graphs</div>
<div class="tab" style="left:490px;width:75px;letter-spacing:-0.15px;padding-right:2px">Trade Graphs</div>
<div class="tab" style="left:565px;width:49px">Settings</div>
</body></html>
